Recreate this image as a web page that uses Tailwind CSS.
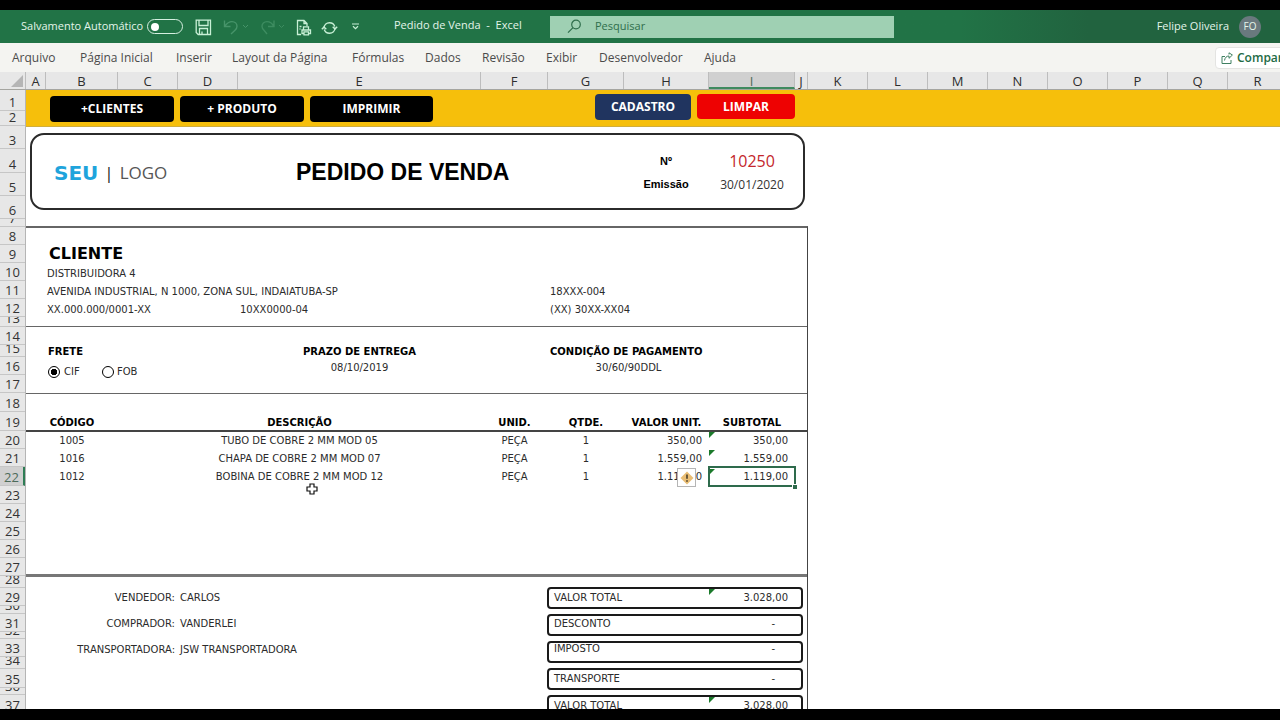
<!DOCTYPE html>
<html lang="pt-BR">
<head>
<meta charset="utf-8">
<meta name="viewport" content="width=device-width, initial-scale=1">
<title>Pedido de Venda - Excel</title>
<script src="https://cdn.jsdelivr.net/npm/@tailwindcss/browser@4"></script>
</head>
<body class="bg-black">
<div class="flex h-screen flex-col overflow-hidden bg-black pt-[10px] pb-[11px] font-['Open_Sans',sans-serif]">

  <!-- Title bar -->
  <header class="flex h-[33px] shrink-0 items-center bg-[#217346] bg-linear-to-r from-[#217346] from-75% to-[#21633f] to-85% text-[11px] text-[#e3f5ea]">
    <div class="flex w-[394px] shrink-0 items-center pl-[21px]">
      <label for="autosave" class="w-[126px] whitespace-nowrap">Salvamento Automático</label>
      <span class="relative flex h-4 w-9 items-center">
        <input id="autosave" type="checkbox" role="switch" class="h-[15px] w-9 appearance-none rounded-full border border-[#d5efe0]">
        <span class="pointer-events-none absolute left-1 size-2 rounded-full bg-white"></span>
      </span>
      <button class="ml-3 pt-[2px]" aria-label="Salvar"><svg width="17" height="17" viewBox="0 0 17 17" fill="none" stroke="#c8f0d6" stroke-width="1.3"><path d="M1.2 1.2h14.300v14.300H3.200l-2-2zM4 1.500v5h9v-5M4.500 15.500v-6h8v6M7 12.500v3"/></svg></button>
      <button class="ml-[11px] pt-[1px]" aria-label="Desfazer"><svg width="17" height="17" viewBox="0 0 17 17" fill="none" stroke="#47946a" stroke-width="1.4"><path d="M1.5 1.5v6h6M1.8 7.2C4 4 6 2.600 9 2.600c3 0 5 2 5 4.600 0 1.700-.7 2.800-2 4L8 15"/></svg></button>
      <svg class="ml-[2px]" width="7" height="5" viewBox="0 0 7 5" fill="none" stroke="#47946a"><path d="M1 1l2.500 2.500L6 1"/></svg>
      <button class="ml-[11px] pt-[1px]" aria-label="Refazer"><svg width="17" height="17" viewBox="0 0 17 17" fill="none" stroke="#3d8c60" stroke-width="1.4"><path d="M14 1.500v6H8M13.700 7.200C12 4 10 2.600 7 2.600c-3 0-5 2-5 4.600 0 1.700.7 2.800 2 4L7 15"/></svg></button>
      <svg class="ml-[1px]" width="7" height="5" viewBox="0 0 7 5" fill="none" stroke="#3d8c60"><path d="M1 1l2.500 2.500L6 1"/></svg>
      <button class="ml-[11px] pt-[2px]" aria-label="Impressão rápida"><svg width="16" height="17" viewBox="0 0 16 17" fill="none" stroke="#c8f0d6" stroke-width="1.3"><path d="M5 15.500H1.500V1.500H8l3 3V7M8 1.500v3h3M3.500 7.500h2M3.500 10h1"/><path d="M7.500 11V7.800h5V11M6 11h8.500v3.500H6z"/><path d="M8 12.800h4.500v3H8z" fill="#217346"/></svg></button>
      <button class="ml-[9px] pt-[2px]" aria-label="Atualizar"><svg width="17" height="14" viewBox="0 0 17 14" fill="none" stroke="#c8f0d6" stroke-width="1.4"><path d="M3 7.500C3 4 5.500 1.700 8.500 1.700c2.600 0 4.500 1.500 5.300 3.800M14 6.500c0 3.500-2.500 5.800-5.500 5.800-2.600 0-4.500-1.500-5.300-3.800"/><path d="M.8 8.200L3 6 5.300 8.200M11.700 5.800L14 8 16.200 5.800"/></svg></button>
      <button class="ml-[13px]" aria-label="Personalizar"><svg width="9" height="7" viewBox="0 0 9 7" fill="none" stroke="#c8f0d6" stroke-width="1.2"><path d="M1 1h7M2 3.300l2.500 2.400L7 3.300"/></svg></button>
    </div>
    <h1 class="w-[156px] shrink-0 pb-[2px] whitespace-pre">Pedido de Venda  -  Excel</h1>
    <div class="flex h-[22px] w-[344px] items-center bg-[#9fd0b3] pl-[17px]">
      <svg class="shrink-0" width="15" height="15" viewBox="0 0 15 15" fill="none" stroke="#2f6e4c" stroke-width="1.2"><circle cx="9" cy="5.500" r="4.300"/><path d="M6 8.700L1 13.700"/></svg>
      <input type="text" aria-label="Pesquisar" placeholder="Pesquisar" class="ml-[13px] min-w-0 flex-1 bg-transparent text-[11px] text-[#2f6e4c] outline-none placeholder:text-[#2f6e4c]">
    </div>
    <div class="ml-auto flex items-center gap-[10px] pr-[19px]">
      <span class="whitespace-nowrap">Felipe Oliveira</span>
      <span class="flex size-[22px] items-center justify-center rounded-full bg-[#69797e] text-[10px]">FO</span>
    </div>
  </header>

  <!-- Ribbon tabs -->
  <div class="flex h-[29px] shrink-0 items-center overflow-hidden bg-[#f4f4f1] text-xs text-[#4b4b4b]">
    <nav class="flex shrink-0 pl-3 whitespace-nowrap">
      <a href="#" class="w-[68px]">Arquivo</a>
      <a href="#" class="w-24">Página Inicial</a>
      <a href="#" class="w-14">Inserir</a>
      <a href="#" class="w-[120px]">Layout da Página</a>
      <a href="#" class="w-[73px]">Fórmulas</a>
      <a href="#" class="w-[57px]">Dados</a>
      <a href="#" class="w-16">Revisão</a>
      <a href="#" class="w-[53px]">Exibir</a>
      <a href="#" class="w-[105px]">Desenvolvedor</a>
      <a href="#" class="w-9">Ajuda</a>
    </nav>
    <button class="-mr-12 ml-auto flex h-[22px] w-[113px] shrink-0 items-center gap-1 rounded-sm border border-[#e4e4e2] bg-white pl-[5px] font-semibold text-[#226b45]">
      <svg width="12" height="12" viewBox="0 0 12 12" fill="none" stroke="#3f8061" stroke-width="1"><path d="M4 4.500H1v7h9V8M3.500 8.500C4 5.500 5.500 4 8 4V6.300L11.400 3 8 .8V2.500"/></svg>
      Compartilhar
    </button>
  </div>

  <!-- Column letters -->
  <div class="flex h-[18px] shrink-0 overflow-hidden border-b border-[#a5a5a0] bg-[#e7e7e7] text-center text-[13px] leading-[18px] text-[#2e2e2e]">
    <div class="flex w-[26px] shrink-0 items-end justify-end border-r border-[#bdbdbd] pr-[2px] pb-[2px]"><svg width="12" height="12" viewBox="0 0 12 12"><path d="M12 0v12H0z" fill="#b5b5b5"/></svg></div>
    <div class="w-5 shrink-0 border-r border-[#bdbdbd]">A</div>
    <div class="w-[72px] shrink-0 border-r border-[#bdbdbd]">B</div>
    <div class="w-[60px] shrink-0 border-r border-[#bdbdbd]">C</div>
    <div class="w-[60px] shrink-0 border-r border-[#bdbdbd]">D</div>
    <div class="w-[243px] shrink-0 border-r border-[#bdbdbd]">E</div>
    <div class="w-[67px] shrink-0 border-r border-[#bdbdbd]">F</div>
    <div class="w-[76px] shrink-0 border-r border-[#bdbdbd]">G</div>
    <div class="w-[85px] shrink-0 border-r border-[#bdbdbd]">H</div>
    <div class="w-[86px] shrink-0 border-r border-b-2 border-r-[#bdbdbd] border-b-[#3f8a5f] bg-[#d0d0d0] text-[#4d6b5a]">I</div>
    <div class="w-[13px] shrink-0 border-r border-[#bdbdbd]">J</div>
    <div class="w-[60px] shrink-0 border-r border-[#bdbdbd]">K</div>
    <div class="w-[60px] shrink-0 border-r border-[#bdbdbd]">L</div>
    <div class="w-[60px] shrink-0 border-r border-[#bdbdbd]">M</div>
    <div class="w-[60px] shrink-0 border-r border-[#bdbdbd]">N</div>
    <div class="w-[60px] shrink-0 border-r border-[#bdbdbd]">O</div>
    <div class="w-[60px] shrink-0 border-r border-[#bdbdbd]">P</div>
    <div class="w-[60px] shrink-0 border-r border-[#bdbdbd]">Q</div>
    <div class="w-[60px] shrink-0 border-r border-[#bdbdbd]">R</div>
  </div>

  <!-- Sheet -->
  <main class="flex min-h-0 flex-1 overflow-hidden bg-white">
    <div id="rows" class="w-[26px] shrink-0 border-r border-[#b5b5b5] bg-[#e7e7e7] text-[13px] text-[#333]"></div>

    <div class="min-w-0 flex-1">
      <!-- Action band -->
      <div class="flex h-[37px] items-start border-b border-[#d0ae3c] bg-[#f6bf0b] text-xs font-bold text-white">
        <div class="flex shrink-0 gap-[6px] pt-[6px] pl-6">
          <button class="h-[26px] w-[124px] rounded-sm bg-black">+CLIENTES</button>
          <button class="h-[26px] w-[124px] rounded-sm bg-black">+ PRODUTO</button>
          <button class="h-[26px] w-[123px] rounded-sm bg-black">IMPRIMIR</button>
        </div>
        <div class="flex shrink-0 gap-[6px] pt-[4px] pl-[162px]">
          <button class="h-[26px] w-24 rounded-sm bg-[#20345f]">CADASTRO</button>
          <button class="h-[25px] w-[98px] rounded-sm bg-[#ee0202]">LIMPAR</button>
        </div>
      </div>

      <div class="w-[782px]">
        <!-- Order heading -->
        <div class="pt-[6px] pr-[3px] pb-4 pl-1">
          <div class="flex h-[77px] items-center rounded-[14px] border-2 border-[#2b2b2b] pt-[2px]">
            <div class="flex w-[264px] items-center pl-[22px] text-[17px] leading-6 text-[#555]">
              <span class="font-['DejaVu_Sans',sans-serif] text-xl leading-6 font-bold text-[#1fa4dc]">SEU</span>
              <span class="px-[6px] text-[#222]">|</span>
              <span>LOGO</span>
            </div>
            <h2 class="w-[330px] font-['Liberation_Sans',sans-serif] text-[23px] font-bold text-black">PEDIDO DE VENDA</h2>
            <dl class="grid grid-cols-[80px_92px] items-center text-center leading-[23px]">
              <dt class="font-['Liberation_Sans',sans-serif] text-[11px] font-bold text-black">Nº</dt>
              <dd class="text-base leading-[23px] text-[#c4262b]">10250</dd>
              <dt class="font-['Liberation_Sans',sans-serif] text-[11px] leading-[23px] font-bold text-black">Emissão</dt>
              <dd class="text-xs leading-[23px] text-[#333]">30/01/2020</dd>
            </dl>
          </div>
        </div>

        <div class="border-t-2 border-r border-t-[#666] border-r-[#444] font-['DejaVu_Sans',sans-serif] text-[10px] leading-[18px] text-[#2b2b2b]">
          <!-- Customer -->
          <section class="border-b border-[#666] pt-[17px] pb-[7px] pl-[21px]">
            <h3 class="h-5 pl-[2px] text-base leading-[18px] font-bold text-black">CLIENTE</h3>
            <p>DISTRIBUIDORA 4</p>
            <div class="grid grid-cols-[193px_310px_1fr]">
              <p class="col-span-2">AVENIDA INDUSTRIAL, N 1000, ZONA SUL, INDAIATUBA-SP</p>
              <p>18XXX-004</p>
              <p>XX.000.000/0001-XX</p>
              <p>10XX0000-04</p>
              <p>(XX) 30XX-XX04</p>
            </div>
          </section>

          <!-- Freight, delivery and payment -->
          <section class="grid grid-cols-[212px_243px_67px_1fr] border-b border-[#666] pt-4 pb-[10px]">
            <fieldset class="pl-[22px]">
              <legend class="leading-[17px] font-bold text-black">FRETE</legend>
              <div class="flex h-[23px] items-center pt-[1px]">
                <input id="cif" type="radio" name="frete" checked class="size-3 appearance-none rounded-full border border-black bg-radial from-black from-40% to-white to-50%">
                <label for="cif" class="w-[42px] pl-1">CIF</label>
                <input id="fob" type="radio" name="frete" class="size-3 appearance-none rounded-full border border-black bg-white">
                <label for="fob" class="pl-[3px]">FOB</label>
              </div>
            </fieldset>
            <div class="text-center">
              <h3 class="leading-[17px] font-bold text-black">PRAZO DE ENTREGA</h3>
              <p class="leading-[15px]">08/10/2019</p>
            </div>
            <div class="col-start-4">
              <h3 class="pl-[2px] leading-[17px] font-bold text-black">CONDIÇÃO DE PAGAMENTO</h3>
              <p class="w-[161px] text-center leading-[15px]">30/60/90DDL</p>
            </div>
          </section>

          <!-- Items -->
          <section class="relative border-b-[3px] border-[#777] pb-[89px]">
            <table class="w-[769px] table-fixed border-collapse text-center">
              <colgroup><col class="w-[92px]"><col class="w-[363px]"><col class="w-[67px]"><col class="w-[76px]"><col class="w-[85px]"><col class="w-[86px]"></colgroup>
              <thead class="text-black">
                <tr class="h-[37px] align-bottom leading-[16px]"><th>CÓDIGO</th><th>DESCRIÇÃO</th><th>UNID.</th><th>QTDE.</th><th>VALOR UNIT.</th><th>SUBTOTAL</th></tr>
              </thead>
              <tbody class="align-bottom leading-[16px]">
                <tr class="h-[18px]"><td>1005</td><td>TUBO DE COBRE 2 MM MOD 05</td><td>PEÇA</td><td>1</td><td class="pr-[7px] text-right">350,00</td><td class="relative pr-[7px] text-right"><svg class="absolute top-[1px] left-0" width="6" height="6"><path d="M0 0h6L0 6z" fill="#1b7a2b"/></svg>350,00</td></tr>
                <tr class="h-[18px]"><td>1016</td><td>CHAPA DE COBRE 2 MM MOD 07</td><td>PEÇA</td><td>1</td><td class="pr-[7px] text-right">1.559,00</td><td class="relative pr-[7px] text-right"><svg class="absolute top-[1px] left-0" width="6" height="6"><path d="M0 0h6L0 6z" fill="#1b7a2b"/></svg>1.559,00</td></tr>
                <tr class="h-[18px]"><td>1012</td><td class="relative">BOBINA DE COBRE 2 MM MOD 12
                  <svg class="absolute top-4 left-[188px]" width="12" height="12" viewBox="0 0 12 12"><path d="M4 1h4v3h3v4H8v3H4V8H1V4h3z" fill="#fff" stroke="#111" stroke-width="1.200"/></svg></td><td>PEÇA</td><td>1</td><td class="relative pr-[7px] text-right">1.119,00
                  <button aria-label="Erro de fórmula" class="absolute top-[1px] left-[53px] flex size-[19px] items-center justify-center border border-[#b5b5b5] bg-white"><svg width="14" height="14" viewBox="0 0 14 14"><path d="M7 .5L13.500 7 7 13.500.5 7z" fill="#e9bd74"/><path d="M7 3.500v4.300M7 9.300v1.400" stroke="#3c3425" stroke-width="1.500"/></svg></button></td><td class="relative pr-[7px] text-right">
                  <span class="absolute -top-px -left-px h-[21px] w-[88px] border-2 border-[#2e6b4c]"></span><span class="absolute top-[17px] -right-[2px] size-[5px] border-t border-l border-white bg-[#2e6b4c]"></span><svg class="absolute top-[2px] left-px" width="5" height="5"><path d="M0 0h5L0 5z" fill="#1b7a2b"/></svg>1.119,00</td></tr>
              </tbody>
            </table>
            <div class="absolute top-9 right-0 left-0 h-[2px] bg-[#444]"></div>
          </section>

          <!-- People and totals -->
          <section class="grid grid-cols-[521px_256px] pt-[10px]">
            <dl class="grid auto-rows-[26px] grid-cols-[149px_1fr] content-start gap-x-[5px] leading-[22px]">
              <dt class="text-right">VENDEDOR:</dt><dd>CARLOS</dd>
              <dt class="text-right">COMPRADOR:</dt><dd>VANDERLEI</dd>
              <dt class="text-right">TRANSPORTADORA:</dt><dd>JSW TRANSPORTADORA</dd>
            </dl>
            <dl class="flex flex-col gap-[5px]">
              <div class="relative flex h-[22px] items-center justify-between rounded-sm border-2 border-[#1a1a1a] pr-[13px] pl-[5px]"><dt>VALOR TOTAL</dt><dd>3.028,00</dd><svg class="absolute top-0 left-[160px]" width="6" height="6"><path d="M0 0h6L0 6z" fill="#1b7a2b"/></svg></div>
              <div class="flex h-[22px] items-center justify-between rounded-sm border-2 border-[#1a1a1a] pr-[26px] pb-[2px] pl-[5px]"><dt>DESCONTO</dt><dd>-</dd></div>
              <div class="flex h-[22px] items-center justify-between rounded-sm border-2 border-[#1a1a1a] pr-[26px] pb-[6px] pl-[5px]"><dt>IMPOSTO</dt><dd>-</dd></div>
              <div class="flex h-[22px] items-center justify-between rounded-sm border-2 border-[#1a1a1a] pr-[26px] pl-[5px]"><dt>TRANSPORTE</dt><dd>-</dd></div>
              <div class="relative flex h-[22px] items-center justify-between rounded-sm border-2 border-[#1a1a1a] pr-[13px] pl-[5px]"><dt>VALOR TOTAL</dt><dd>3.028,00</dd><svg class="absolute top-0 left-[160px]" width="6" height="6"><path d="M0 0h6L0 6z" fill="#1b7a2b"/></svg></div>
            </dl>
          </section>
        </div>
      </div>
    </div>
  </main>
</div>
<script>
  // Row heights of the sheet, from row 1 down
  const heights = [21,15,23,24,23,23,8,18,18,18,18,18,10,18,12,18,18,19,19,18,18,19,18,18,18,18,18,12,18,8,18,7,18,12,19,7,19];
  const activeRow = 22;
  const box = document.getElementById('rows');
  heights.forEach((h, i) => {
    const row = document.createElement('div');
    row.className = i + 1 === activeRow
      ? 'flex items-end justify-center overflow-hidden border-b border-r-2 border-b-[#c6c6c6] border-r-[#2e7d55] bg-[#d0d0d0] leading-[15px] text-[#4d6b5a]'
      : 'flex items-end justify-center overflow-hidden border-b border-[#c6c6c6] leading-[15px]';
    row.style.height = h + 'px';
    row.textContent = i + 1;
    box.append(row);
  });
</script>
</body>
</html>
